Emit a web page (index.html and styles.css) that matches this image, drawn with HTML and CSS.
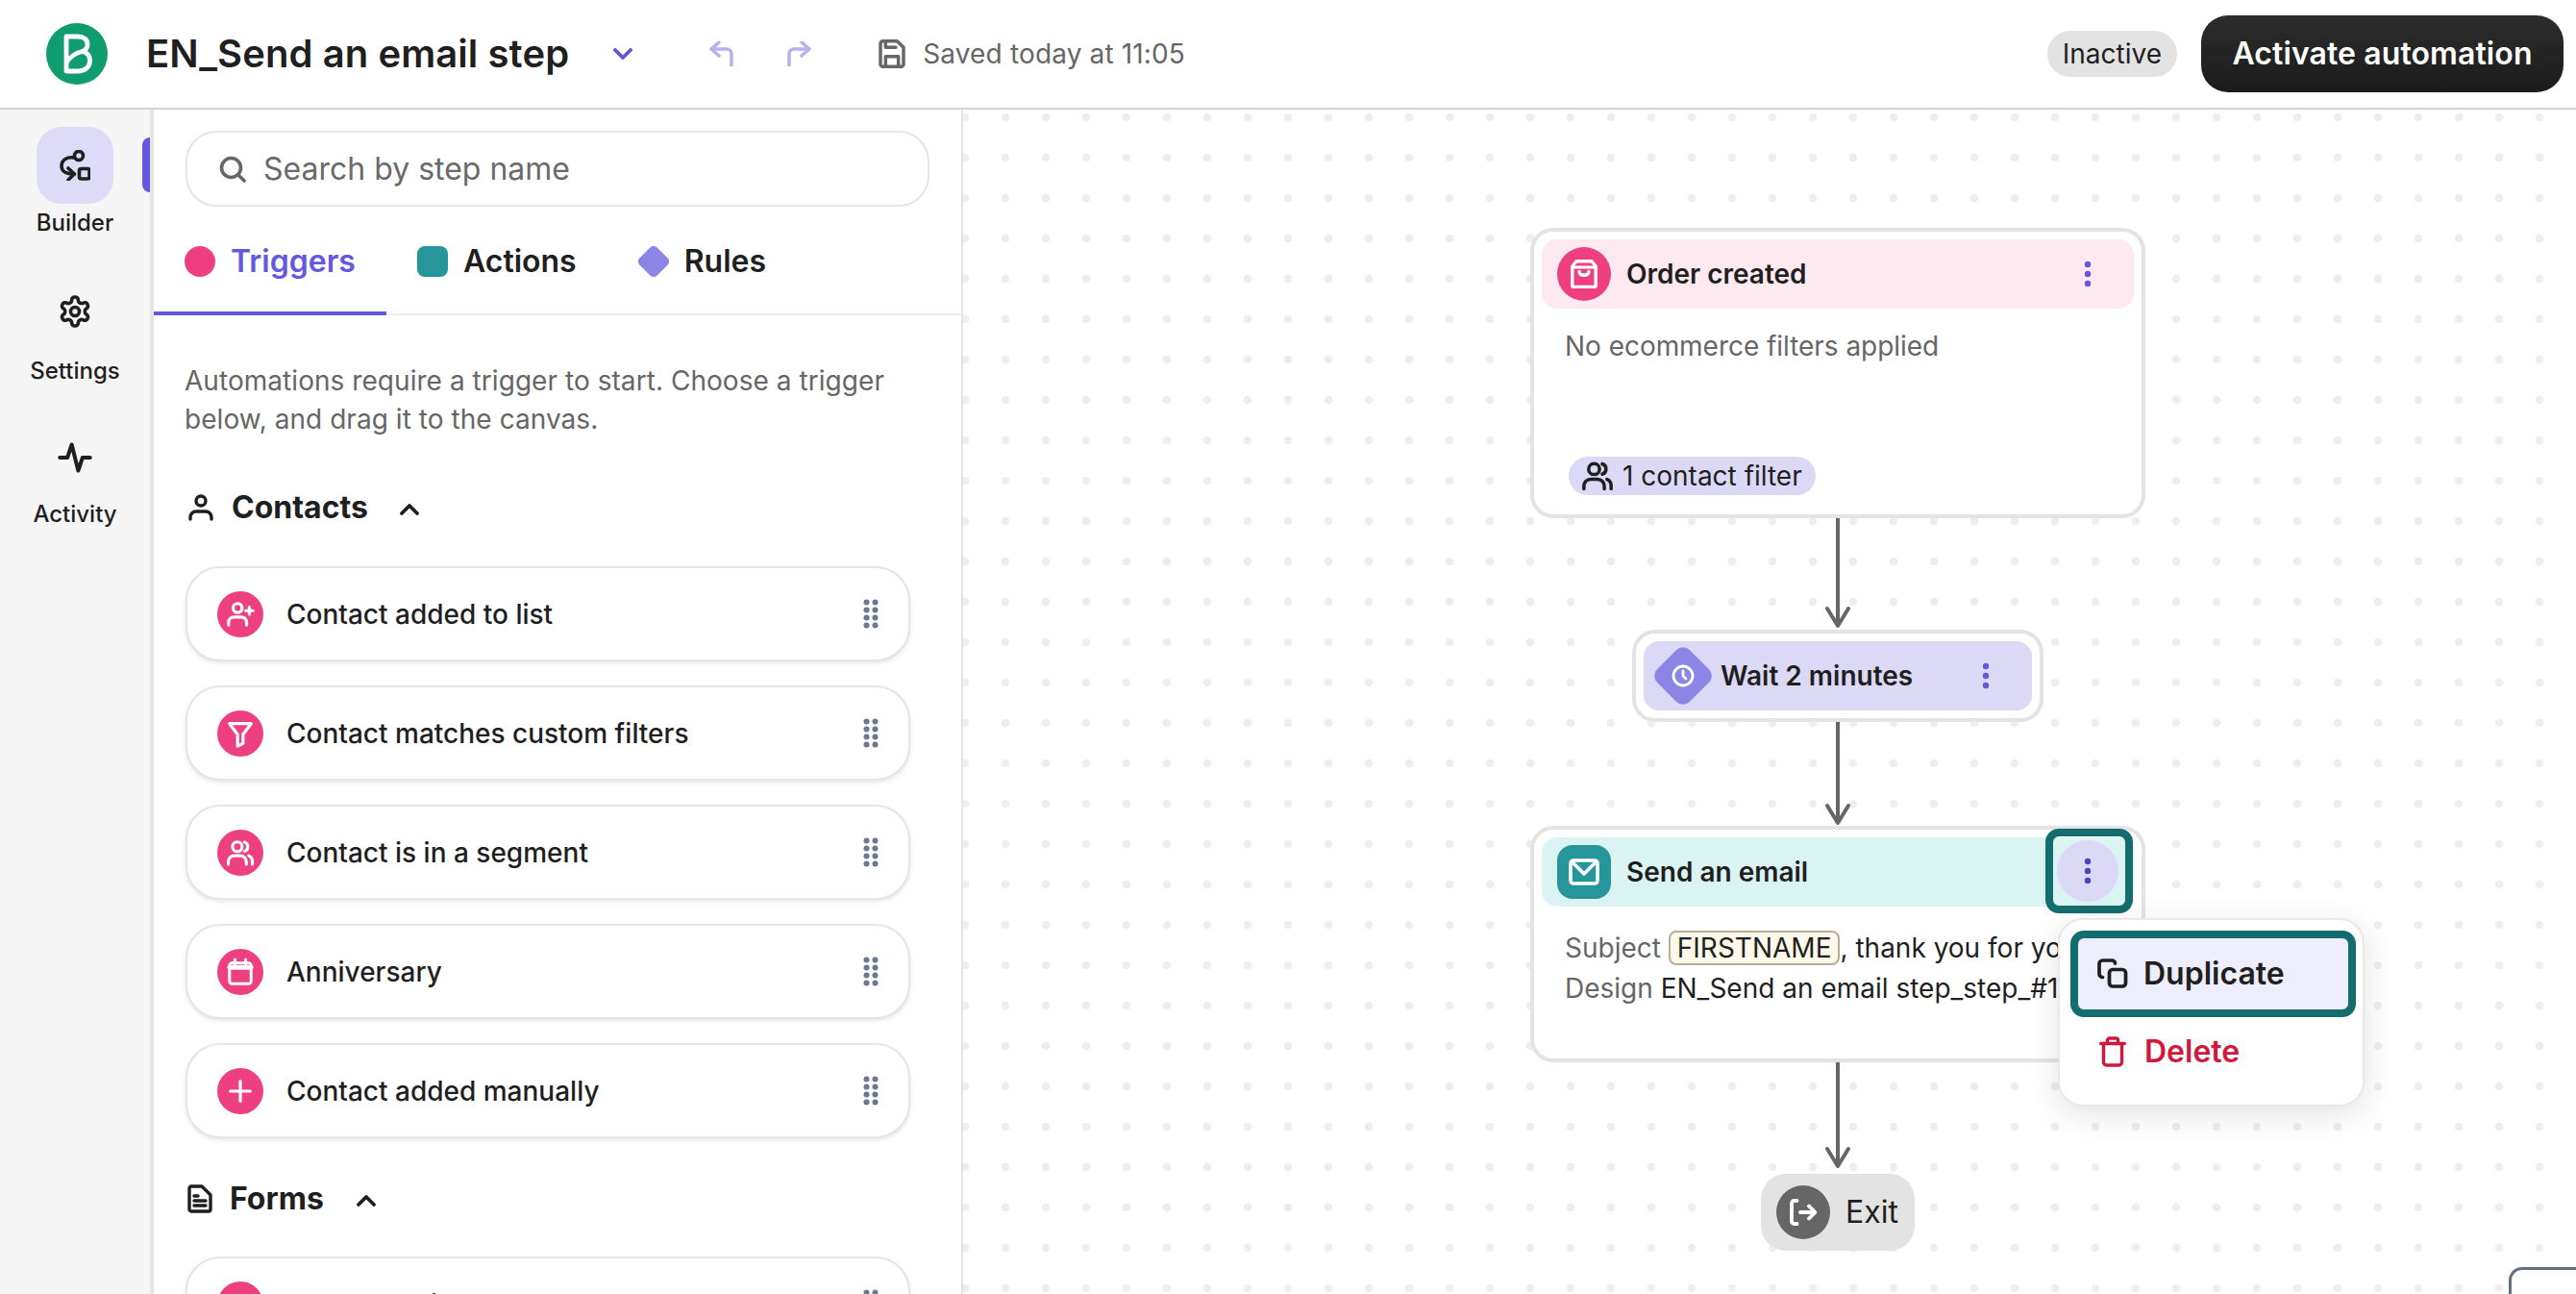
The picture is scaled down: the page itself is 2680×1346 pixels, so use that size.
FILE: index.html
```
<!DOCTYPE html>
<html lang="en">
<head>
<meta charset="utf-8">
<title>EN_Send an email step</title>
<link rel="stylesheet" href="styles.css">
</head>
<body>
<svg class="sprite" aria-hidden="true">
  <symbol id="i-dots" viewBox="0 0 8 28"><circle cx="4" cy="4" r="3.2" fill="currentColor"/><circle cx="4" cy="14" r="3.2" fill="currentColor"/><circle cx="4" cy="24" r="3.2" fill="currentColor"/></symbol>
  <symbol id="i-grip" viewBox="0 0 16 32"><g fill="#6b7890"><circle cx="3.5" cy="3.5" r="3"/><circle cx="12.5" cy="3.5" r="3"/><circle cx="3.5" cy="11.5" r="3"/><circle cx="12.5" cy="11.5" r="3"/><circle cx="3.5" cy="19.5" r="3"/><circle cx="12.5" cy="19.5" r="3"/><circle cx="3.5" cy="27.5" r="3"/><circle cx="12.5" cy="27.5" r="3"/></g></symbol>
  <symbol id="i-chev-up" viewBox="0 0 20 12"><path d="M2 10l8-8 8 8" fill="none" stroke="currentColor" stroke-width="3.8" stroke-linecap="round" stroke-linejoin="round"/></symbol>
  <symbol id="i-users" viewBox="0 0 24 24"><g fill="none" stroke="currentColor" stroke-width="2.5" stroke-linecap="round"><circle cx="9.5" cy="7" r="4"/><path d="M2 21.500v-2a5 5 0 0 1 5-5h5a5 5 0 0 1 5 5v2"/><path d="M15.500 3.200a4 4 0 0 1 0 7.600"/><path d="M19 14.500a5 5 0 0 1 3 4.700v2.300"/></g></symbol>
</svg>

<header class="topbar">
  <svg class="logo" viewBox="0 0 64 64"><circle cx="32" cy="32" r="32" fill="#0f9d70"/><g fill="none" stroke="#fff" stroke-width="4.800" stroke-linejoin="round"><path d="M21 14h12c6 0 10 3 10 8 0 3.500-2 6-5 7.500 4.500 1 7.500 4.500 7.500 9.500 0 7-5.500 11-12.500 11H21z"/><path d="M21 41c4-6 9-10 17-11.500"/></g></svg>
  <h1 class="title">EN_Send an email step</h1>
  <svg class="chev-down" viewBox="0 0 20 12"><path d="M2 2l8 8 8-8" fill="none" stroke="currentColor" stroke-width="3.800" stroke-linecap="round" stroke-linejoin="round"/></svg>
  <svg class="hist hist-undo" viewBox="0 0 28 26"><path d="M11 15L3 8l8-7M3 8h16a5 5 0 0 1 5 5v12" fill="none" stroke="currentColor" stroke-width="3.600" stroke-linecap="round" stroke-linejoin="round"/></svg>
  <svg class="hist hist-redo" viewBox="0 0 28 26"><path d="M17 15l8-7-8-7M25 8H9a5 5 0 0 0-5 5v12" fill="none" stroke="currentColor" stroke-width="3.600" stroke-linecap="round" stroke-linejoin="round"/></svg>
  <svg class="save-icon" viewBox="0 0 24 24"><g fill="none" stroke="currentColor" stroke-width="2.600" stroke-linecap="round" stroke-linejoin="round"><path d="M19 22H5a2 2 0 0 1-2-2V4a2 2 0 0 1 2-2h11l5 5v13a2 2 0 0 1-2 2z"/><path d="M17 22v-8H7v8M7 2v5h8"/></g></svg>
  <span class="saved">Saved today at 11:05</span>
  <span class="status">Inactive</span>
  <button class="activate">Activate automation</button>
</header>

<main class="workspace">
  <nav class="rail">
    <span class="rail-marker"></span>
    <a class="rail-item rail-builder">
      <span class="rail-active"><svg class="rail-icon" viewBox="0 0 32 32"><g fill="none" stroke="currentColor" stroke-width="3.600" stroke-linecap="round" stroke-linejoin="round"><circle cx="20" cy="6" r="4.500"/><rect x="20.500" y="19.500" width="10.500" height="10.500" rx="2"/><path d="M15 8c-7-1-13 2-13 9 0 5 5 8 13 8"/><path d="M9 19l6.500 6L9 31"/></g></svg></span>
      <span class="rail-label">Builder</span>
    </a>
    <a class="rail-item rail-settings">
      <svg class="rail-icon rail-gear" viewBox="0 0 24 24"><g fill="none" stroke="currentColor" stroke-width="2.400" stroke-linecap="round" stroke-linejoin="round"><path d="M12.220 2h-.44a2 2 0 0 0-2 2v.18a2 2 0 0 1-1 1.730l-.43.25a2 2 0 0 1-2 0l-.15-.08a2 2 0 0 0-2.730.73l-.22.38a2 2 0 0 0 .73 2.730l.15.1a2 2 0 0 1 1 1.720v.51a2 2 0 0 1-1 1.740l-.15.09a2 2 0 0 0-.73 2.730l.22.38a2 2 0 0 0 2.730.73l.15-.08a2 2 0 0 1 2 0l.43.25a2 2 0 0 1 1 1.730V20a2 2 0 0 0 2 2h.44a2 2 0 0 0 2-2v-.18a2 2 0 0 1 1-1.730l.43-.25a2 2 0 0 1 2 0l.15.08a2 2 0 0 0 2.730-.73l.22-.39a2 2 0 0 0-.73-2.730l-.15-.08a2 2 0 0 1-1-1.740v-.5a2 2 0 0 1 1-1.740l.15-.09a2 2 0 0 0 .73-2.730l-.22-.38a2 2 0 0 0-2.730-.73l-.15.08a2 2 0 0 1-2 0l-.43-.25a2 2 0 0 1-1-1.730V4a2 2 0 0 0-2-2z"/><circle cx="12" cy="12" r="3"/></g></svg>
      <span class="rail-label">Settings</span>
    </a>
    <a class="rail-item rail-activity">
      <svg class="rail-icon rail-pulse" viewBox="0 0 32 32"><path d="M2 16h7l4-12 6 24 4-12h7" fill="none" stroke="currentColor" stroke-width="3.600" stroke-linecap="round" stroke-linejoin="round"/></svg>
      <span class="rail-label">Activity</span>
    </a>
  </nav>

  <aside class="panel">
    <label class="search">
      <svg class="search-icon" viewBox="0 0 28 28"><g fill="none" stroke="currentColor" stroke-width="3.600" stroke-linecap="round"><circle cx="12.500" cy="12.500" r="10"/><path d="M20 20l6 6"/></g></svg>
      <span class="search-placeholder">Search by step name</span>
    </label>
    <div class="tabs">
      <div class="tab tab-active"><span class="mark mark-trigger"></span>Triggers</div>
      <div class="tab"><span class="mark mark-action"></span>Actions</div>
      <div class="tab"><span class="mark mark-rule"></span>Rules</div>
    </div>
    <p class="intro">Automations require a trigger to start. Choose a trigger below, and drag it to the canvas.</p>

    <h2 class="group group-contacts">
      <svg class="group-icon" viewBox="0 0 26 28"><g fill="none" stroke="currentColor" stroke-width="3.400" stroke-linecap="round"><circle cx="13" cy="7" r="5"/><path d="M2 26v-2a6 6 0 0 1 6-6h10a6 6 0 0 1 6 6v2"/></g></svg>
      <span>Contacts</span>
      <svg class="group-chev" viewBox="0 0 20 12"><use href="#i-chev-up"/></svg>
    </h2>
    <ul class="cards">
      <li class="card"><span class="card-icon"><svg viewBox="0 0 32 32"><g fill="none" stroke="#fff" stroke-width="3.400" stroke-linecap="round"><circle cx="13" cy="9" r="5"/><path d="M3 28v-3a6 6 0 0 1 6-6h8a6 6 0 0 1 6 6v3M26 8v8M22 12h8"/></g></svg></span><span class="card-text">Contact added to list</span><svg class="grip"><use href="#i-grip"/></svg></li>
      <li class="card"><span class="card-icon"><svg viewBox="0 0 32 32"><path d="M4 5h24L19 17v10l-6 3V17z" fill="none" stroke="#fff" stroke-width="3.400" stroke-linejoin="round"/></svg></span><span class="card-text">Contact matches custom filters</span><svg class="grip"><use href="#i-grip"/></svg></li>
      <li class="card"><span class="card-icon"><svg viewBox="0 0 24 24" class="icon-white"><use href="#i-users"/></svg></span><span class="card-text">Contact is in a segment</span><svg class="grip"><use href="#i-grip"/></svg></li>
      <li class="card"><span class="card-icon"><svg viewBox="0 0 32 32"><g fill="none" stroke="#fff" stroke-width="3.200" stroke-linecap="round"><rect x="4" y="6" width="24" height="23" rx="3"/><path d="M10 2v6M22 2v6"/><path d="M4 11h24" stroke-width="5"/></g></svg></span><span class="card-text">Anniversary</span><svg class="grip"><use href="#i-grip"/></svg></li>
      <li class="card"><span class="card-icon"><svg viewBox="0 0 32 32"><path d="M16 5v22M5 16h22" fill="none" stroke="#fff" stroke-width="3.400" stroke-linecap="round"/></svg></span><span class="card-text">Contact added manually</span><svg class="grip"><use href="#i-grip"/></svg></li>
    </ul>

    <h2 class="group group-forms">
      <svg class="group-icon" viewBox="0 0 26 30"><g fill="none" stroke="currentColor" stroke-width="3.400" stroke-linejoin="round" stroke-linecap="round"><path d="M4 2h11l9 9v15a2 2 0 0 1-2 2H4a2 2 0 0 1-2-2V4a2 2 0 0 1 2-2z"/><path d="M7 12h4M7 17h12M7 22h12"/></g></svg>
      <span>Forms</span>
      <svg class="group-chev" viewBox="0 0 20 12"><use href="#i-chev-up"/></svg>
    </h2>
    <ul class="cards">
      <li class="card"><span class="card-icon"></span><span class="card-text">Form submitted</span><svg class="grip"><use href="#i-grip"/></svg></li>
    </ul>
  </aside>

  <section class="canvas">
    <svg class="links" width="1678" height="1232">
      <g fill="none" stroke="#666" stroke-width="4" stroke-linecap="round" stroke-linejoin="round">
        <path d="M910 425V536M899 519l11 18 11-18"/>
        <path d="M910 637V741M899 724l11 18 11-18"/>
        <path d="M910 991V1098M899 1081l11 18 11-18"/>
      </g>
    </svg>

    <article class="node node-order">
      <div class="node-head head-pink">
        <span class="badge badge-pink"><svg viewBox="0 0 28 30"><g fill="none" stroke="#fff" stroke-linejoin="round" stroke-linecap="round"><path d="M6 1.800h16L26.200 7v20a1.500 1.500 0 0 1-1.500 1.500H3.300A1.500 1.500 0 0 1 1.800 27V7z" stroke-width="3.400"/><path d="M2 8h24" stroke-width="3"/><path d="M9 12.500c.5 5 9.500 5 10 0" stroke-width="3.400"/></g></svg></span>
        <span class="node-title">Order created</span>
        <svg class="kebab"><use href="#i-dots"/></svg>
      </div>
      <p class="node-line node-muted">No ecommerce filters applied</p>
      <span class="contact-chip"><svg class="chip-icon"><use href="#i-users"/></svg>1 contact filter</span>
    </article>

    <article class="node node-wait">
      <div class="node-head head-violet">
        <span class="diamond"><svg viewBox="0 0 24 24"><g fill="none" stroke="#fff" stroke-width="2.800" stroke-linecap="round" stroke-linejoin="round"><circle cx="12" cy="12" r="10"/><path d="M12 7v5l3 3"/></g></svg></span>
        <span class="node-title">Wait 2 minutes</span>
        <svg class="kebab"><use href="#i-dots"/></svg>
      </div>
    </article>

    <article class="node node-email">
      <div class="node-head head-teal">
        <span class="badge badge-teal"><svg viewBox="0 0 32 28"><g fill="none" stroke="#fff" stroke-width="3.600" stroke-linejoin="round"><rect x="2" y="2" width="28" height="24" rx="3"/><path d="M3 3l13 13L29 3"/></g></svg></span>
        <span class="node-title">Send an email</span>
      </div>
      <p class="node-line node-subject"><span class="node-muted">Subject</span> <span class="token">FIRSTNAME</span>, thank you for your order</p>
      <p class="node-line"><span class="node-muted">Design</span> EN_Send an email step_step_#1</p>
      <span class="focus-kebab"><span class="focus-circle"><svg class="kebab-dark"><use href="#i-dots"/></svg></span></span>
    </article>

    <div class="menu">
      <div class="menu-item menu-focus">
        <svg class="menu-icon" viewBox="0 0 32 32"><g fill="none" stroke="currentColor" stroke-width="3.700" stroke-linejoin="round" stroke-linecap="round"><rect x="12.500" y="11.500" width="17" height="17.500" rx="3.500"/><path d="M5.500 19.500A3.500 3.500 0 0 1 2 16V5.500A3.500 3.500 0 0 1 5.500 2H15a3.500 3.500 0 0 1 3.500 3"/></g></svg>
        Duplicate
      </div>
      <div class="menu-item menu-danger">
        <svg class="menu-icon menu-trash" viewBox="0 0 28 32"><g fill="none" stroke="currentColor" stroke-width="3.400" stroke-linejoin="round" stroke-linecap="round"><path d="M1.700 7.500h24.600M4.500 8v19a3 3 0 0 0 3 3h13a3 3 0 0 0 3-3V8"/><path d="M8.500 7V4a2 2 0 0 1 2-2h7a2 2 0 0 1 2 2v3"/></g></svg>
        Delete
      </div>
    </div>

    <div class="exit">
      <span class="exit-badge"><svg viewBox="0 0 28 28"><g fill="none" stroke="#fff" stroke-width="3.800" stroke-linecap="round" stroke-linejoin="round"><path d="M7.500 2H4.500A2.500 2.500 0 0 0 2 4.500v19A2.500 2.500 0 0 0 4.500 26h3"/><path d="M11 14h15M20 7.500l6.500 6.500-6.500 6.500"/></g></svg></span>
      <span>Exit</span>
    </div>

    <div class="corner-widget"></div>
  </section>
</main>
</body>
</html>
```

FILE: styles.css
```
* { box-sizing: border-box; }
html, body { margin: 0; height: 100%; }
body {
  width: 2680px;
  height: 1346px;
  overflow: hidden;
  font-family: Inter, "Liberation Sans", sans-serif;
  color: #1f1f1f;
  background: #fff;
  display: flex;
  flex-direction: column;
}
.sprite { display: none; }
svg { display: block; flex: none; }

/* top bar */
.topbar {
  flex: none;
  height: 114px;
  border-bottom: 2px solid #d2d2d2;
  display: flex;
  align-items: center;
  padding: 0 13px 0 48px;
}
.logo { width: 64px; height: 64px; }
.title { margin: 0 0 0 40px; font-size: 40px; font-weight: 600; line-height: 48px; color: #1f1f1f; letter-spacing: .08px; }
.chev-down { width: 20px; height: 12px; margin-left: 46px; color: #5f55d6; }
.hist { width: 28px; height: 26px; color: #b7b1f0; }
.hist-undo { margin-left: 79px; }
.hist-redo { margin-left: 52px; }
.save-icon { width: 32px; height: 32px; margin-left: 67px; color: #666; }
.saved { margin-left: 16px; font-size: 28px; line-height: 40px; color: #666; letter-spacing: .15px; }
.status {
  margin-left: auto;
  height: 48px;
  padding: 0 16px;
  border-radius: 24px;
  background: #e3e3e3;
  font-size: 28px;
  line-height: 48px;
  color: #1f1f1f;
}
.activate {
  margin: 0 0 0 25px;
  width: 377px;
  height: 80px;
  border: 0;
  border-radius: 28px;
  background: linear-gradient(#2d2d2d, #1b1b1b);
  color: #fff;
  font: 600 32px/40px Inter, "Liberation Sans", sans-serif;
  letter-spacing: .1px;
  padding: 0;
}

/* layout */
.workspace { flex: 1; display: flex; min-height: 0; }

.rail {
  position: relative;
  flex: none;
  width: 160px;
  background: #f5f5f5;
  border-right: 4px solid #e5e5e5;
  padding-top: 18px;
  display: flex;
  flex-direction: column;
  align-items: center;
}
.rail-marker {
  position: absolute;
  left: 148px;
  top: 29px;
  width: 8px;
  height: 57px;
  background: #6558e0;
  border-radius: 8px 0 0 8px;
}
.rail-item { display: flex; flex-direction: column; align-items: center; color: #1f1f1f; }
.rail-active {
  width: 80px;
  height: 80px;
  border-radius: 26px;
  background: #dedbf9;
  display: flex;
  align-items: center;
  justify-content: center;
}
.rail-icon { width: 32px; height: 32px; }
.rail-gear { width: 36px; height: 36px; }
.rail-pulse { width: 36px; height: 36px; }
.rail-label { font-size: 24px; line-height: 32px; font-weight: 500; color: #1f1f1f; }
.rail-builder .rail-label { margin-top: 4px; }
.rail-settings { margin-top: 58px; }
.rail-settings .rail-label { margin-top: 28px; }
.rail-activity { margin-top: 56px; }
.rail-activity .rail-label { margin-top: 25px; }

.panel {
  flex: none;
  width: 842px;
  border-right: 2px solid #e5e5e5;
  padding: 22px 0 0 33px;
  overflow: hidden;
}
.search {
  width: 774px;
  height: 79px;
  border: 2px solid #e5e5e5;
  border-radius: 32px;
  display: flex;
  align-items: center;
  padding-left: 33px;
  gap: 18px;
}
.search-icon { width: 28px; height: 28px; color: #666; }
.search-placeholder { font-size: 32px; line-height: 40px; color: #6a6a6a; }

.tabs {
  margin-left: -33px;
  display: flex;
  box-shadow: inset 0 -2px 0 #f0f0f0;
}
.tab {
  display: flex;
  align-items: center;
  gap: 16px;
  padding: 41px 32px 36px;
  border-bottom: 4px solid transparent;
  font-size: 32px;
  line-height: 32px;
  font-weight: 600;
  color: #1f1f1f;
}
.tab-active { border-bottom-color: #6558e0; color: #6558e0; }
.mark { width: 32px; height: 32px; flex: none; }
.mark-trigger { border-radius: 50%; background: #ee4080; }
.mark-action { border-radius: 8px; background: #26969a; }
.mark-rule { background: #8c85e6; transform: scale(.8) rotate(45deg); border-radius: 6px; }

.intro {
  margin: 48px 0 0 -1px;
  width: 760px;
  font-size: 28px;
  line-height: 40px;
  letter-spacing: .05px;
  color: #666;
}
.group {
  margin: 52px 0 0;
  height: 40px;
  display: flex;
  align-items: center;
  font-size: 32px;
  font-weight: 700;
  line-height: 40px;
  color: #1f1f1f;
}
.group-contacts .group-icon { width: 26px; height: 28px; margin: 0 19px 0 3px; }
.group-contacts .group-chev { margin-left: 33px; }
.group-forms { margin-top: 43px; }
.group-forms .group-icon { width: 26px; height: 30px; margin: 0 18px 0 2px; }
.group-forms .group-chev { margin-left: 34px; }
.group-chev { width: 20px; height: 12px; color: #1f1f1f; margin-top: 4px; }

.cards {
  list-style: none;
  margin: 41px 0 0;
  padding: 0;
  display: flex;
  flex-direction: column;
  gap: 25px;
}
.group-forms + .cards { margin-top: 40px; }
.card {
  width: 754px;
  height: 99px;
  flex: none;
  background: #fff;
  border: 2px solid #e5e5e5;
  border-radius: 36px;
  box-shadow: 0 2px 4px rgba(0, 0, 0, .1);
  display: flex;
  align-items: center;
  padding: 0 31px 0 31px;
}
.card-icon {
  width: 48px;
  height: 48px;
  border-radius: 50%;
  background: #ee4080;
  display: flex;
  align-items: center;
  justify-content: center;
  flex: none;
}
.card-icon svg { width: 30px; height: 30px; }
.icon-white { color: #fff; }
.card-text { margin-left: 24px; font-size: 28px; font-weight: 500; line-height: 40px; color: #1f1f1f; }
.grip { width: 16px; height: 32px; margin-left: auto; }

/* canvas */
.canvas {
  position: relative;
  flex: 1;
  min-width: 0;
  overflow: hidden;
  background-color: #fff;
  background-image: radial-gradient(circle, #eeeeee 4px, transparent 4.6px);
  background-size: 42px 42px;
  background-position: -19px -13px;
}
.links { position: absolute; left: 0; top: 0; }

.node {
  position: absolute;
  background: #fff;
  border: 4px solid #e3e3e3;
  border-radius: 24px;
  padding: 8px;
  display: flex;
  flex-direction: column;
}
.node-order { left: 590px; top: 123px; width: 640px; height: 302px; }
.node-wait { left: 696px; top: 541px; width: 428px; height: 96px; }
.node-email { left: 590px; top: 745px; width: 640px; height: 246px; overflow: visible; }

.node-head {
  flex: none;
  height: 72px;
  border-radius: 16px;
  display: flex;
  align-items: center;
  padding-left: 16px;
}
.head-pink { background: #fde9ef; }
.head-violet { background: #dcd9f7; padding-left: 11px; }
.head-teal { background: #daf4f4; }
.badge {
  width: 56px;
  height: 56px;
  flex: none;
  display: flex;
  align-items: center;
  justify-content: center;
}
.badge-pink { border-radius: 50%; background: #ee4080; }
.badge-pink svg { width: 28px; height: 30px; }
.badge-teal { border-radius: 16px; background: #26969a; }
.badge-teal svg { width: 32px; height: 28px; }
.diamond {
  width: 60px;
  height: 60px;
  flex: none;
  display: flex;
  align-items: center;
  justify-content: center;
  position: relative;
}
.diamond::before {
  content: "";
  position: absolute;
  inset: 6px;
  background: #8c85e6;
  border-radius: 10px;
  transform: rotate(45deg);
}
.diamond svg { position: relative; width: 24px; height: 24px; }
.node-title { margin-left: 16px; font-size: 28px; font-weight: 600; line-height: 40px; color: #1f1f1f; }
.head-violet .node-title { margin-left: 9px; }
.kebab { width: 8px; height: 28px; margin-left: auto; margin-right: 44px; color: #6558e0; }
.node-line {
  margin: 0 0 0 24px;
  font-size: 28px;
  line-height: 42px;
  white-space: nowrap;
  overflow: hidden;
  color: #1f1f1f;
}
.node-muted { color: #666; }
p.node-muted { margin-top: 19px; line-height: 40px; letter-spacing: -.04px; }
.node-subject { margin-top: 22px; }
.token {
  display: inline-block;
  height: 36px;
  padding: 0 7px;
  line-height: 32px;
  background: #fdf8ea;
  border: 2px solid #b9ad97;
  border-radius: 8px;
  color: #1f1f1f;
}
.contact-chip {
  margin: auto 0 12px 28px;
  align-self: flex-start;
  height: 40px;
  width: 257px;
  border-radius: 20px;
  background: #dcd9f7;
  display: flex;
  align-items: center;
  padding-left: 13px;
  gap: 9px;
  font-size: 28px;
  line-height: 40px;
  color: #1f1f1f;
  white-space: nowrap;
}
.chip-icon { width: 34px; height: 34px; color: #1f1f1f; }

.focus-kebab {
  position: absolute;
  left: 532px;
  top: -1px;
  width: 91px;
  height: 88px;
  border: 8px solid #136c6e;
  border-radius: 14px;
  padding-right: 3px;
  display: flex;
  align-items: center;
  justify-content: center;
}
.focus-circle {
  width: 64px;
  height: 64px;
  border-radius: 50%;
  background: #dcd9f7;
  display: flex;
  align-items: center;
  justify-content: center;
}
.kebab-dark { width: 8px; height: 28px; color: #4f43b8; }

.menu {
  position: absolute;
  left: 1139px;
  top: 841px;
  width: 319px;
  height: 196px;
  background: #fff;
  border: 2px solid #e8e8e8;
  border-radius: 26px;
  box-shadow: 0 8px 32px rgba(0, 0, 0, .12);
  padding: 11px 7px 0 11px;
}
.menu-item {
  display: flex;
  align-items: center;
  gap: 16px;
  font-size: 32px;
  font-weight: 600;
  line-height: 40px;
}
.menu-focus {
  height: 90px;
  border: 8px solid #136c6e;
  border-radius: 14px;
  background: #eeedfb;
  padding-left: 20px;
  color: #1f1f1f;
}
.menu-danger { height: 60px; margin-top: 6px; padding-left: 30px; gap: 19px; color: #d0173e; }
.menu-icon { width: 32px; height: 32px; }
.menu-trash { width: 28px; }

.exit {
  position: absolute;
  left: 830px;
  top: 1107px;
  width: 160px;
  height: 80px;
  background: #e3e3e3;
  border-radius: 26px;
  display: flex;
  align-items: center;
  padding-left: 16px;
  gap: 16px;
  font-size: 32px;
  line-height: 40px;
  color: #1f1f1f;
}
.exit-badge {
  width: 56px;
  height: 56px;
  border-radius: 50%;
  background: #666;
  display: flex;
  align-items: center;
  justify-content: center;
}
.exit-badge svg { width: 28px; height: 28px; }

.corner-widget {
  position: absolute;
  left: 1608px;
  top: 1204px;
  width: 120px;
  height: 80px;
  background: #fff;
  border: 3px solid #637083;
  border-radius: 14px;
}
```
